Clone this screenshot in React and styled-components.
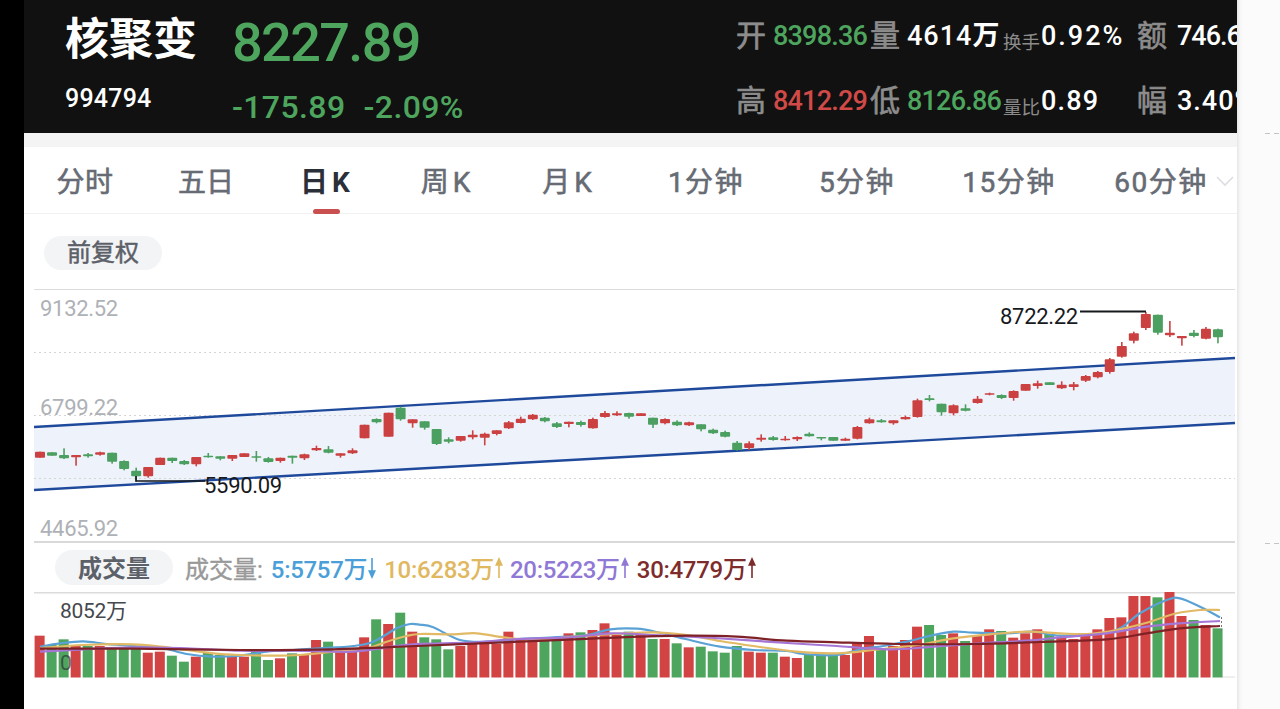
import React from 'react';
import styled, { createGlobalStyle } from 'styled-components';

const NUM_FONT = `Roboto, "Noto Sans CJK SC", sans-serif`;
const RED = '#d24343';
const GREEN = '#4ea55e';

const GlobalStyle = createGlobalStyle`
  html, body { margin: 0; padding: 0; background: #000; }
  body { font-family: ${NUM_FONT}; }
`;

const Page = styled.div`
  width: 1280px;
  height: 709px;
  display: flex;
  overflow: hidden;
  background: #000;
`;
const LeftEdge = styled.div`
  width: 24px;
  flex: none;
`;
const Main = styled.div`
  width: 1213px;
  flex: none;
  background: #fff;
  display: flex;
  flex-direction: column;
`;
const SidePanel = styled.div`
  flex: 1;
  position: relative;
  background: linear-gradient(90deg, #e6e6e6 0, #f6f6f6 3px, #fbfbfb 6px);
`;
const SideDash = styled.div`
  position: absolute;
  left: 28px;
  top: ${p => p.$top}px;
  width: 14px;
  height: 1px;
  background: repeating-linear-gradient(90deg, #c4c4c4 0 5px, transparent 5px 9px);
`;

const Header = styled.div`
  height: 133px;
  flex: none;
  background: #111;
  display: flex;
  overflow: hidden;
`;
const Identity = styled.div`
  width: 208px;
  flex: none;
  padding: 18px 0 0 41px;
  box-sizing: border-box;
`;
const StockName = styled.div`
  font-size: 44px;
  line-height: 44px;
  font-weight: 700;
  color: #fff;
  white-space: nowrap;
`;
const StockCode = styled.div`
  margin-top: 22px;
  font-size: 25px;
  line-height: 30px;
  letter-spacing: .2px;
  font-weight: 500;
  color: #fff;
`;
const Quote = styled.div`
  flex: 1;
  padding-top: 18px;
`;
const Price = styled.div`
  font-size: 54px;
  line-height: 50px;
  letter-spacing: -1.6px;
  font-weight: 500;
  color: ${GREEN};
`;
const Change = styled.div`
  margin-top: 24px;
  display: flex;
  gap: 18px;
  font-size: 32px;
  line-height: 30px;
  letter-spacing: .4px;
  font-weight: 500;
  color: ${GREEN};
`;
const Stats = styled.div`
  width: 501px;
  flex: none;
  overflow: hidden;
  display: grid;
  grid-template-columns: 37px 97px 37px 96px 38px 96px 40px 80px;
  grid-template-rows: 65px 65px;
  padding-top: 3px;
  align-items: center;
`;
const StatLabel = styled.div`
  font-size: 30px;
  line-height: 34px;
  color: #8c8c8c;
  -webkit-text-stroke: .7px #8c8c8c;
  white-space: nowrap;
`;
const StatValue = styled.div`
  font-size: 27px;
  line-height: 34px;
  letter-spacing: ${p => p.$spacing ?? -0.8}px;
  font-weight: 500;
  color: ${p => p.$color || '#fff'};
  white-space: nowrap;
`;
const Unit = styled.span`
  font-weight: 700;
  letter-spacing: 0;
`;
const SmallLabel = styled.div`
  font-size: 18.5px;
  line-height: 22px;
  margin-top: 14px;
  color: #8c8c8c;
  white-space: nowrap;
`;

const Gap = styled.div`
  height: 14px;
  flex: none;
  background: #f4f4f4;
`;
const Tabs = styled.div`
  height: 66px;
  flex: none;
  position: relative;
  display: flex;
  border-bottom: 1px solid #f1f1f1;
`;
const Tab = styled.div`
  width: ${p => p.$width}px;
  flex: none;
  position: relative;
  display: flex;
  align-items: center;
  justify-content: center;
  font-size: 28px;
  letter-spacing: ${p => p.$spacing}px;
  white-space: nowrap;
  font-weight: ${p => (p.$active ? 700 : 400)};
  color: ${p => (p.$active ? '#2a2f38' : '#666b74')};
  -webkit-text-stroke: ${p => (p.$active ? '0' : '.6px #666b74')};
`;
const TabMark = styled.div`
  position: absolute;
  left: 47px;
  bottom: -1px;
  width: 27px;
  height: 5px;
  border-radius: 3px;
  background: #c9504f;
`;
const Chevron = styled.svg`
  position: absolute;
  right: 2px;
  top: 27px;
  width: 20px;
  height: 14px;
`;

const Toolbar = styled.div`
  height: 75px;
  flex: none;
  padding: 22px 0 0 20px;
  box-sizing: border-box;
`;
const Pill = styled.div`
  width: 118px;
  height: ${p => p.$height}px;
  box-sizing: border-box;
  padding-bottom: ${p => p.$lift}px;
  flex: none;
  border-radius: 18px;
  background: #f3f4f6;
  display: flex;
  align-items: center;
  justify-content: center;
  font-size: 24px;
  font-weight: ${p => p.$weight};
  color: #5c6068;
  -webkit-text-stroke: ${p => (p.$weight < 700 ? '.5px #5c6068' : '0')};
`;

const ChartArea = styled.div`
  height: ${p => p.$height}px;
  flex: ${p => (p.$grow ? 1 : 'none')};
  position: relative;
`;
const ChartSvg = styled.svg`
  display: block;
  width: 1213px;
  height: ${p => p.$height}px;
`;
const AxisLabel = styled.div`
  position: absolute;
  left: ${p => p.$left}px;
  top: ${p => p.$top}px;
  font-size: ${p => p.$size || 22}px;
  line-height: 26px;
  letter-spacing: -.3px;
  color: ${p => p.$color || '#aeb1b6'};
  white-space: nowrap;
`;

const VolumeBar = styled.div`
  height: 49px;
  flex: none;
  padding: 7px 0 0 31px;
  box-sizing: border-box;
  display: flex;
  align-items: flex-start;
`;
const Legend = styled.div`
  display: flex;
  align-items: center;
  height: 35px;
  margin-left: 12px;
  font-size: 24px;
  white-space: nowrap;
`;
const LegendTitle = styled.span`
  color: #999;
  -webkit-text-stroke: .4px #999;
  margin-right: 8px;
`;
const LegendItem = styled.span`
  display: flex;
  align-items: center;
  margin-right: ${p => p.$gap}px;
  color: ${p => p.$color};
  font-weight: 500;
  letter-spacing: -.3px;
`;
const ArrowIcon = styled.svg`
  width: 8px;
  height: 22px;
  margin-left: 1px;
`;

// candle rows: colour, body top, body bottom, wick top, wick bottom, read off the chart
const CANDLE_SEGMENTS = [
  { base: 285, rows: [
    ['r',500,518],['g',502,512],['g',510,520,490,522],['r',510,517,510,542],['g',508,514,504,518],['r',502,509,500,512],
    ['g',503,530,503,536],['g',528,552,526,556],['g',557,574,548,590],['r',546,574,546,578],['r',518,540],['g',518,528,518,534],
    ['g',528,538,525,540],['r',516,538,516,544],['g',512,516,504,518],['g',514,521,514,526],['r',510,521,510,528],['r',505,516],
    ['g',514,518,498,530],['g',520,531,516,533],['r',518,528,518,533],['g',512,518,512,536],['r',508,520,506,525],['r',489,496,482,498],
  ] },
  { base: 370, rows: [
    ['g',238,248,228,250],['r',250,257,250,263],['r',241,250,235,252],['r',164,205],['g',147,157,145,160],['r',128,200],
    ['g',113,148,110,152],['r',148,160,148,173],['g',154,173,154,179],['g',177,222,177,225],['g',208,215,202,220],['r',198,212,198,215],
    ['r',194,202,181,208],['r',191,203,188,226],['r',181,192,181,196],['r',157,175,153,177],['r',146,159,140,160],['r',134,148,132,150],
    ['g',143,154,141,157],['g',160,171,156,174],['r',155,162,155,172],['g',156,165,152,170],['r',147,175,143,176],['r',129,141,123,143],
    ['r',130,136,124,138],['g',129,140,128,146],
  ] },
  { base: 340, rows: [
    ['r',220,228],['g',233,254,233,264],['r',237,250,235,253],['g',245,256,241,258],['r',247,256,245,258],['g',253,268,253,274],
    ['g',269,280,266,282],['g',276,290,272,292],['g',308,330,303,332],['r',310,324,304,330],['r',293,299,283,305],['g',292,300,288,302],
    ['r',296,300,288,302],['r',291,298,289,303],['g',281,289,277,290],['g',291,294,291,301],['g',291,302],['r',296,302,293,303],
    ['r',261,296,258,298],['r',238,250,233,251],['g',241,247,237,248],['r',241,250,241,254],['r',231,238,227,239],['r',181,231,176,233],
    ['g',175,180,165,184],['g',191,217,191,227],['r',196,220,193,226],
  ] },
  { base: 290, rows: [
    ['g',355,362,343,364],['r',326,339,318,341],['r',310,314,308,316],['g',315,324,313,327],['r',303,324,301,332],['r',282,302],
    ['r',280,288,272,296],['g',277,285],['r',284,295,274,297],['r',283,291,276,301],['r',258,272,255,276],['r',246,262,243,265],
    ['r',208,246,204,251],['r',168,200,156,203],['r',130,152,125,160],['r',72,114,66,120],['g',74,128,74,134],['r',128,136,93,141],
    ['r',138,145,138,167],['g',128,138,120,142],['r',116,146,111,148],['g',118,142,116,160],
  ] },
];
const CANDLES = CANDLE_SEGMENTS.flatMap(({ base, rows }) =>
  rows.map(([c, top, bottom, wickTop = top, wickBottom = bottom]) => ({
    color: c === 'r' ? '#cb4141' : '#4b9f60',
    top: base + top / 3,
    bottom: base + bottom / 3,
    wickTop: base + wickTop / 3,
    wickBottom: base + wickBottom / 3,
  }))
);

const VOLUMES = [
  ['r',287],['g',315],['g',298],['r',315],['g',318],['r',318],['g',325],['g',325],['g',325],['r',338],['r',335],['g',347],
  ['g',365],['r',350],['g',338],['g',345],['r',350],['r',350],['g',335],['g',360],['r',355],['g',340],['r',345],['r',300],
  ['g',305],['r',335],['r',335],['r',292],['g',238],['r',252],['g',218],['r',275],['g',292],['g',298],['g',328],['r',318],
  ['r',310],['r',312],['r',312],['r',275],['r',300],['r',300],['g',300],['g',295],['r',280],['g',277],['r',270],['r',250],
  ['r',285],['g',275],['r',282],['g',297],['r',297],['g',310],['r',322],['g',320],['g',334],['g',338],['g',318],['r',335],
  ['r',338],['g',338],['r',350],['r',354],['g',342],['g',343],['g',343],['r',345],['r',310],['r',288],['g',330],['r',318],
  ['r',300],['r',260],['g',255],['g',285],['r',280],['g',303],['r',285],['r',268],['g',273],['r',293],['r',280],['r',268],
  ['g',282],['r',290],['r',297],['r',285],['r',268],['r',234],['r',232],['r',168],['r',168],['g',172],['r',156],['r',228],
  ['g',240],['r',255],['g',265],
];

// moving average points, x then y, in the three crops of the volume chart
const toPage = (xBase, pts) => pts.map(([x, y]) => [xBase + x / 3, 540 + y / 3]);
const MA_LINES = [
  { color: '#5aa2d6', pts: [
    ...toPage(0, [[120,320],[180,310],[250,304],[320,312],[400,318],[480,322],[560,342],[640,350],[720,347],[800,335],[880,330],[960,325],[1060,318],[1120,305],[1190,265],[1230,252]]),
    ...toPage(420, [[0,254],[40,262],[120,300],[200,305],[280,298],[400,292],[500,285],[570,268],[650,266],[720,278],[800,298],[900,320],[1000,330],[1100,333],[1150,342],[1250,345]]),
    ...toPage(840, [[60,328],[130,318],[200,305],[260,290],[340,275],[400,278],[500,280],[580,275],[660,287],[780,280],[840,265],[900,220],[980,180],[1020,175],[1080,200],[1140,232]]),
  ] },
  { color: '#e2b964', pts: [
    ...toPage(0, [[120,325],[250,315],[400,313],[480,320],[560,330],[640,340],[720,345],[820,347],[900,345],[1000,335],[1100,325],[1160,305],[1220,288]]),
    ...toPage(420, [[0,282],[100,283],[170,280],[250,292],[340,300],[440,292],[560,283],[700,277],[800,285],[900,303],[1000,318],[1130,335],[1250,340]]),
    ...toPage(840, [[100,330],[230,315],[340,295],[450,283],[560,275],[660,280],[740,282],[830,270],[920,248],[1010,220],[1080,210],[1140,210]]),
  ] },
  { color: '#a676d6', pts: [
    ...toPage(0, [[120,335],[250,328],[400,322],[560,325],[720,332],[880,332],[1060,335],[1160,322],[1250,312]]),
    ...toPage(420, [[150,308],[280,298],[450,292],[570,280],[700,285],[850,292],[1000,302],[1150,312],[1250,318]]),
    ...toPage(840, [[150,328],[280,320],[420,310],[560,302],[660,292],[800,280],[920,260],[1020,250],[1140,243]]),
  ] },
  { color: '#7f2227', pts: [
    ...toPage(0, [[120,326],[400,326],[720,330],[1000,328],[1250,318]]),
    ...toPage(420, [[300,305],[600,292],[800,287],[950,290],[1100,302],[1250,307]]),
    ...toPage(840, [[170,312],[400,312],[600,306],[800,298],[920,280],[1020,265],[1140,258]]),
  ] },
];

const smoothPath = pts => {
  let d = `M${pts[0][0].toFixed(1)} ${pts[0][1].toFixed(1)}`;
  for (let i = 0; i < pts.length - 1; i++) {
    const p0 = pts[i - 1] || pts[i];
    const p1 = pts[i];
    const p2 = pts[i + 1];
    const p3 = pts[i + 2] || p2;
    const c1 = [p1[0] + (p2[0] - p0[0]) / 6, p1[1] + (p2[1] - p0[1]) / 6];
    const c2 = [p2[0] - (p3[0] - p1[0]) / 6, p2[1] - (p3[1] - p1[1]) / 6];
    d += `C${c1[0].toFixed(1)} ${c1[1].toFixed(1)} ${c2[0].toFixed(1)} ${c2[1].toFixed(1)} ${p2[0].toFixed(1)} ${p2[1].toFixed(1)}`;
  }
  return d;
};

const candleX = i => 40 + i * 12.02;

const PriceChart = () => (
  <ChartSvg $height={254} viewBox="24 289 1213 254">
    <line x1="34" x2="1235" y1="289.5" y2="289.5" stroke="#dcdcdc" />
    <line x1="34" x2="1235" y1="542" y2="542" stroke="#d9d9d9" strokeWidth="2" />
    <polygon points="34,427 1235,358 1235,423 34,490" fill="#eef3fb" />
    {[352.5, 415.5, 478.5].map(y => (
      <line key={y} x1="34" x2="1235" y1={y} y2={y} stroke="#d5d5d5" strokeDasharray="2 3" />
    ))}
    <line x1="34" y1="427" x2="1235" y2="358" stroke="#1f4a9c" strokeWidth="2.4" />
    <line x1="34" y1="490" x2="1235" y2="423" stroke="#1f4a9c" strokeWidth="2.4" />
    {CANDLES.map((c, i) => {
      const x = candleX(i);
      return (
        <g key={i} fill={c.color}>
          <rect x={x - 0.8} y={c.wickTop} width="1.6" height={c.wickBottom - c.wickTop} />
          <rect x={x - 5} y={c.top} width="10" height={Math.max(c.bottom - c.top, 1.5)} rx="1" />
        </g>
      );
    })}
    <path d="M136 476V481H205" fill="none" stroke="#15181c" strokeWidth="1.6" />
    <path d="M1080 311.5H1146" fill="none" stroke="#15181c" strokeWidth="2" />
  </ChartSvg>
);

const VolumeChart = () => (
  <ChartSvg $height={117} viewBox="24 592 1213 117">
    <line x1="34" x2="1235" y1="592.5" y2="592.5" stroke="#dcdcdc" strokeWidth="2" />
    <line x1="1222" x2="1235" y1="677" y2="677" stroke="#dedede" />
    {VOLUMES.map(([c, top], i) => {
      const y = 540 + top / 3;
      return (
        <rect key={i} x={candleX(i) - 5.4} y={y} width="10" height={677.5 - y} fill={c === 'r' ? RED : GREEN} />
      );
    })}
    {MA_LINES.map(l => (
      <path key={l.color} d={smoothPath(l.pts)} fill="none" stroke={l.color} strokeWidth="2.2" />
    ))}
    <line x1="1221.5" x2="1221.5" y1="617" y2="632" stroke="#777" strokeDasharray="2 2" />
  </ChartSvg>
);

const Arrow = ({ up, color }) => (
  <ArrowIcon viewBox="0 0 8 22">
    {up ? (
      <path d="M4 21V3M1.2 8L4 2l2.8 6z" stroke={color} strokeWidth="1.6" fill={color} />
    ) : (
      <path d="M4 1v18M1.2 14L4 20l2.8-6z" stroke={color} strokeWidth="1.6" fill={color} />
    )}
  </ArrowIcon>
);

const TABS = [
  ['分时', 122, 0.5], ['五日', 120, 0], ['日K', 122, 4], ['周K', 119, 4], ['月K', 124, 4],
  ['1分钟', 150, 1.5], ['5分钟', 152, 1.5], ['15分钟', 152, 1.5], ['60分钟', 152, 1.5],
];

const LEGEND = [
  { label: '5:5757万', color: '#4b9fd8', up: false, gap: 8 },
  { label: '10:6283万', color: '#e0b860', up: true, gap: 7 },
  { label: '20:5223万', color: '#8f78d6', up: true, gap: 8 },
  { label: '30:4779万', color: '#7d2b2b', up: true, gap: 0 },
];

const App = () => (
  <>
    <GlobalStyle />
    <Page>
      <LeftEdge />
      <Main>
        <Header>
          <Identity>
            <StockName>核聚变</StockName>
            <StockCode>994794</StockCode>
          </Identity>
          <Quote>
            <Price>8227.89</Price>
            <Change>
              <span>-175.89</span>
              <span>-2.09%</span>
            </Change>
          </Quote>
          <Stats>
            <StatLabel>开</StatLabel>
            <StatValue $color={GREEN}>8398.36</StatValue>
            <StatLabel>量</StatLabel>
            <StatValue $spacing={1}>4614<Unit>万</Unit></StatValue>
            <SmallLabel>换手</SmallLabel>
            <StatValue $spacing={2}>0.92%</StatValue>
            <StatLabel>额</StatLabel>
            <StatValue $spacing={-1}>746.6</StatValue>

            <StatLabel>高</StatLabel>
            <StatValue $color="#d24a48">8412.29</StatValue>
            <StatLabel>低</StatLabel>
            <StatValue $color={GREEN}>8126.86</StatValue>
            <SmallLabel>量比</SmallLabel>
            <StatValue $spacing={1.2}>0.89</StatValue>
            <StatLabel>幅</StatLabel>
            <StatValue $spacing={1}>3.40%</StatValue>
          </Stats>
        </Header>
        <Gap />
        <Tabs>
          {TABS.map(([label, width, spacing]) => (
            <Tab key={label} $width={width} $spacing={spacing} $active={label === '日K'}>
              {label}
              {label === '日K' && <TabMark />}
            </Tab>
          ))}
          <Chevron viewBox="0 0 20 14">
            <path d="M2 3l8 8 8-8" fill="none" stroke="#dcdde0" strokeWidth="1.6" />
          </Chevron>
        </Tabs>
        <Toolbar>
          <Pill $height={34} $weight={400} $lift={5}>前复权</Pill>
        </Toolbar>
        <ChartArea $height={254}>
          <PriceChart />
          <AxisLabel $left={16} $top={7}>9132.52</AxisLabel>
          <AxisLabel $left={16} $top={106}>6799.22</AxisLabel>
          <AxisLabel $left={16} $top={227}>4465.92</AxisLabel>
          <AxisLabel $left={976} $top={15} $color="#17191d">8722.22</AxisLabel>
          <AxisLabel $left={180} $top={184} $color="#17191d">5590.09</AxisLabel>
        </ChartArea>
        <VolumeBar>
          <Pill $height={35} $weight={700} $lift={2}>成交量</Pill>
          <Legend>
            <LegendTitle>成交量:</LegendTitle>
            {LEGEND.map(item => (
              <LegendItem key={item.label} $color={item.color} $gap={item.gap}>
                {item.label}
                <Arrow up={item.up} color={item.color} />
              </LegendItem>
            ))}
          </Legend>
        </VolumeBar>
        <ChartArea $height={117} $grow>
          <VolumeChart />
          <AxisLabel $left={36} $top={6} $size={21} $color="#45484d">8052万</AxisLabel>
          <AxisLabel $left={36} $top={58} $size={21} $color="rgba(50,60,55,.75)">0</AxisLabel>
        </ChartArea>
      </Main>
      <SidePanel>
        <SideDash $top={133} />
        <SideDash $top={543} />
      </SidePanel>
    </Page>
  </>
);

export default App;
